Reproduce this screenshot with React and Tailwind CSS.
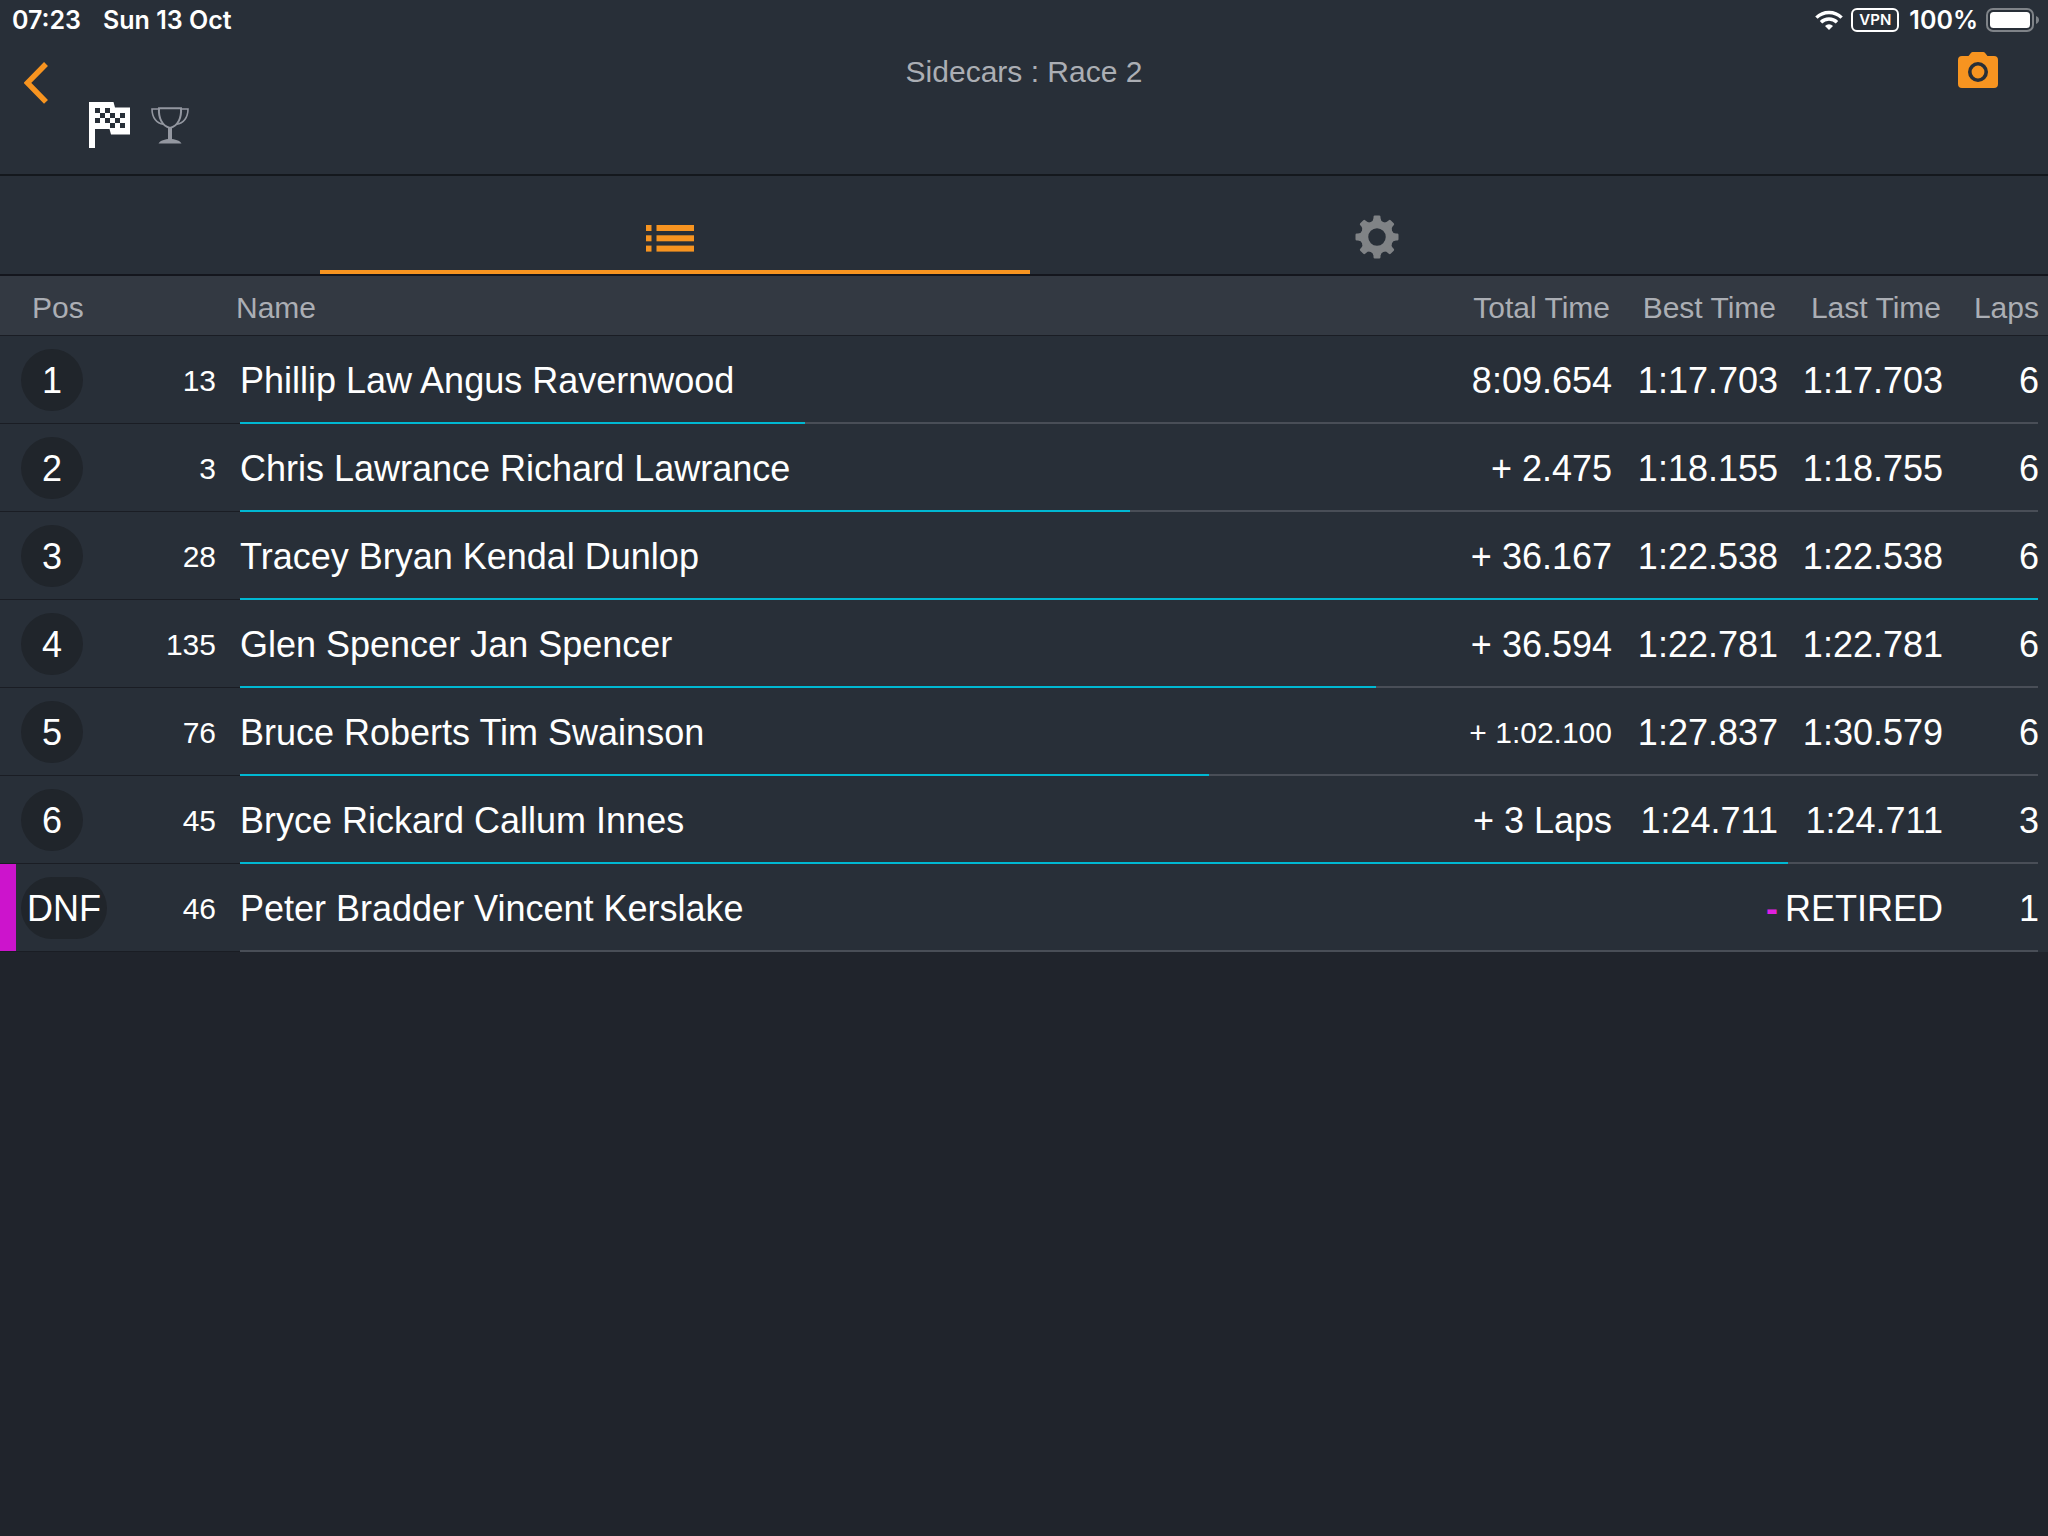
const results = [
  { pos: '1', no: '13', name: 'Phillip Law Angus Ravernwood', total: '8:09.654', best: '1:17.703', last: '1:17.703', laps: 6, progress: 31.4 },
  { pos: '2', no: '3', name: 'Chris Lawrance Richard Lawrance', total: '+ 2.475', best: '1:18.155', last: '1:18.755', laps: 6, progress: 49.5 },
  { pos: '3', no: '28', name: 'Tracey Bryan Kendal Dunlop', total: '+ 36.167', best: '1:22.538', last: '1:22.538', laps: 6, progress: 100 },
  { pos: '4', no: '135', name: 'Glen Spencer Jan Spencer', total: '+ 36.594', best: '1:22.781', last: '1:22.781', laps: 6, progress: 63.2 },
  { pos: '5', no: '76', name: 'Bruce Roberts Tim Swainson', total: '+ 1:02.100', best: '1:27.837', last: '1:30.579', laps: 6, progress: 53.9 },
  { pos: '6', no: '45', name: 'Bryce Rickard Callum Innes', total: '+ 3 Laps', best: '1:24.711', last: '1:24.711', laps: 3, progress: 86.1 },
  { pos: 'DNF', no: '46', name: 'Peter Bradder Vincent Kerslake', total: '', best: '-', last: 'RETIRED', laps: 1, progress: 0 },
]

function WifiIcon() {
  return (
    <svg width="28" height="20" viewBox="0 0 28 20" fill="none" stroke="#fff" strokeWidth="3.4">
      <path d="M1.4 7.6a18 18 0 0 1 25.2 0" />
      <path d="M6 12.3a11.4 11.4 0 0 1 16 0" />
      <path d="M14 20l-4-4.1a5.8 5.8 0 0 1 8 0z" fill="#fff" stroke="none" />
    </svg>
  )
}

function BatteryIcon() {
  return (
    <svg width="54" height="24" viewBox="0 0 54 24" fill="none">
      <rect x="1" y="1" width="46" height="22" rx="6" stroke="#7f8388" strokeWidth="2" />
      <rect x="4" y="4" width="40" height="16" rx="3.5" fill="#fff" />
      <path d="M50 8c2 .8 3 2.2 3 4s-1 3.200-3 4z" fill="#7f8388" />
    </svg>
  )
}

function FlagIcon() {
  const squares = [
    [6, 6], [16, 6],
    [11, 11], [21, 11], [31, 11],
    [6, 16], [16, 16], [26, 16],
    [21, 21], [31, 21],
  ]
  return (
    <svg width="41" height="46" viewBox="0 0 41 46">
      <path d="M0 0h24.500l1.500 5.500h15v27H22l-1.500-5.500H6v19H0z" fill="#fff" />
      {squares.map(([x, y]) => (
        <rect key={`${x}-${y}`} x={x} y={y} width="5" height="5" fill="#282f38" />
      ))}
    </svg>
  )
}

function TrophyIcon() {
  return (
    <svg width="38" height="37" viewBox="0 0 38 37" fill="none" stroke="#9397a0">
      <path d="M8 1.200h22c.6 9-2.500 17.600-11 19.800C10.500 18.800 7.400 10.200 8 1.200z" strokeWidth="2" />
      <path d="M8 2H1c0 8.500 4.500 14.500 11.500 15.200M30 2h7c0 8.500-4.500 14.500-11.500 15.200" strokeWidth="1.600" />
      <path d="M19 20.500V33" strokeWidth="4" />
      <path d="M7.500 36.500C9 33.500 14 32 19 32s10 1.500 11.500 4.500z" fill="#9397a0" stroke="none" />
    </svg>
  )
}

function CameraIcon() {
  return (
    <svg width="40" height="36" viewBox="0 0 40 36">
      <path d="M4 4h6.500l2.600-3.200A2 2 0 0 1 14.700 0h10.600a2 2 0 0 1 1.600.8L29.500 4H36a4 4 0 0 1 4 4v24a4 4 0 0 1-4 4H4a4 4 0 0 1-4-4V8a4 4 0 0 1 4-4z" fill="#f79420" />
      <circle cx="20" cy="20" r="8.200" fill="none" stroke="#282f38" strokeWidth="3.600" />
    </svg>
  )
}

function ListIcon() {
  return (
    <svg width="48" height="27" viewBox="0 0 48 27" fill="#f79420">
      {[0, 10.3, 20.6].map((y) => (
        <g key={y}>
          <rect x="0" y={y} width="5.5" height="6" />
          <rect x="10.5" y={y} width="37.5" height="6" />
        </g>
      ))}
    </svg>
  )
}

function GearIcon() {
  return (
    <svg width="44" height="44" viewBox="-22 -22 44 44" fill="#808386">
      <circle r="12.5" fill="none" stroke="#808386" strokeWidth="7.5" />
      {[0, 45, 90, 135, 180, 225, 270, 315].map((angle) => (
        <path
          key={angle}
          transform={`rotate(${angle})`}
          d="M-6.500-14.500Q-3.600-16-3.500-19V-20.200Q-3.400-21.500-2.200-21.500H2.200Q3.400-21.500 3.500-20.200V-19Q3.600-16 6.500-14.500z"
        />
      ))}
    </svg>
  )
}

function ResultRow({ row }) {
  const dnf = row.pos === 'DNF'
  const small = row.total.length > 9
  return (
    <>
      <tr className="h-[86px] text-right text-[36px] leading-10">
        <td className={`pt-0.5 text-left ${dnf ? 'border-l-16 border-[#cc14cc] pl-[5px]' : 'pl-[21px]'}`}>
          <span
            className={`flex h-[62px] items-center justify-center rounded-full bg-[#20252b] pt-0.5 ${dnf ? 'w-[86px]' : 'w-[62px]'}`}
          >
            {row.pos}
          </span>
        </td>
        <td className="pt-1 pr-5 text-[30px]">{row.no}</td>
        <td className="pt-1 pl-1 text-left">{row.name}</td>
        <td className={`pt-1 ${small ? 'text-[30px]' : ''}`}>{row.total}</td>
        <td className={`pt-1 ${dnf ? 'font-bold text-[#e020e0]' : ''}`}>{row.best}</td>
        <td className="pt-1">{row.last}</td>
        <td className="pt-1 pr-[9px]">{row.laps}</td>
      </tr>
      {/* Lap progress doubles as the row divider */}
      <tr aria-hidden="true">
        <td colSpan={2}>
          <div className={`h-px w-4 ${dnf ? 'bg-[#cc14cc]' : ''}`} />
          <div className="-mr-1 h-px bg-[#1a1d24]" />
        </td>
        <td colSpan={5} className="pr-[10px] pl-1">
          <div className="h-0.5 bg-[#494e57]">
            <div className="h-full bg-[#00b8d2]" style={{ width: `${row.progress}%` }} />
          </div>
        </td>
      </tr>
    </>
  )
}

export default function App() {
  return (
    <div className="min-h-screen bg-[#20242c] font-['Liberation_Sans',Arial,sans-serif] text-white">
      {/* Status bar */}
      <div className="flex h-10 items-center justify-between bg-[#282f38] pr-2 pl-3 font-['Inter',sans-serif] text-[25px] font-semibold">
        <div className="flex gap-[22px] pt-0.5">
          <span>07:23</span>
          <span>Sun 13 Oct</span>
        </div>
        <div className="flex items-center">
          <WifiIcon />
          <span className="mr-2.5 ml-2 flex h-6 w-12 items-center justify-center rounded-md border-2 border-white text-[15px]">
            VPN
          </span>
          <span className="mr-2 pt-0.5">100%</span>
          <BatteryIcon />
        </div>
      </div>

      {/* Title bar */}
      <header className="grid h-[136px] grid-cols-[1fr_auto_1fr] items-start border-b-2 border-[#14181d] bg-[#282f38]">
        <div className="flex gap-10 pt-5 pl-6">
          <button type="button" aria-label="Back" className="h-11">
            <svg width="25" height="44" viewBox="0 0 25 44" fill="none" stroke="#f79420" strokeWidth="5.500">
              <path d="M22 4L3.500 22.800l18.500 19" />
            </svg>
          </button>
          <div className="flex gap-[21px] pt-[42px]">
            <FlagIcon />
            <span className="pt-[5px]">
              <TrophyIcon />
            </span>
          </div>
        </div>
        <h1 className="pt-3 text-[30px] leading-10 text-[#abaeb4]">Sidecars : Race 2</h1>
        <button type="button" aria-label="Take photo" className="mr-[50px] justify-self-end pt-3">
          <CameraIcon />
        </button>
      </header>

      {/* Tabs */}
      <div
        role="tablist"
        className="grid h-[100px] grid-cols-[710fr_702fr] border-b-2 border-[#14161d] bg-[#282f38] pr-[316px] pl-80"
      >
        <button
          type="button"
          role="tab"
          aria-selected="true"
          aria-label="Results"
          className="flex justify-center border-b-4 border-[#f79420] pt-[49px] pr-2.5"
        >
          <ListIcon />
        </button>
        <button type="button" role="tab" aria-selected="false" aria-label="Settings" className="flex justify-center pt-[39px] pr-2">
          <GearIcon />
        </button>
      </div>

      <table className="w-full table-fixed border-separate border-spacing-0 bg-[#282f38]">
        <colgroup>
          <col className="w-[120px]" />
          <col className="w-[116px]" />
          <col />
          <col className="w-[166px]" />
          <col className="w-[166px]" />
          <col className="w-[165px]" />
          <col className="w-[105px]" />
        </colgroup>
        <thead>
          <tr className="h-[60px] bg-[#333942] text-right text-[30px] leading-10 whitespace-nowrap text-[#abaeb4] *:border-b *:border-[#1a1d24] *:pt-1 *:font-normal">
            <th className="pl-8 text-left">Pos</th>
            <th aria-label="Number" />
            <th className="text-left">Name</th>
            <th className="pr-0.5">Total Time</th>
            <th className="pr-0.5">Best Time</th>
            <th className="pr-0.5">Last Time</th>
            <th className="pr-[9px]">Laps</th>
          </tr>
        </thead>
        <tbody>
          {results.map((row) => (
            <ResultRow key={row.no} row={row} />
          ))}
        </tbody>
      </table>
    </div>
  )
}
